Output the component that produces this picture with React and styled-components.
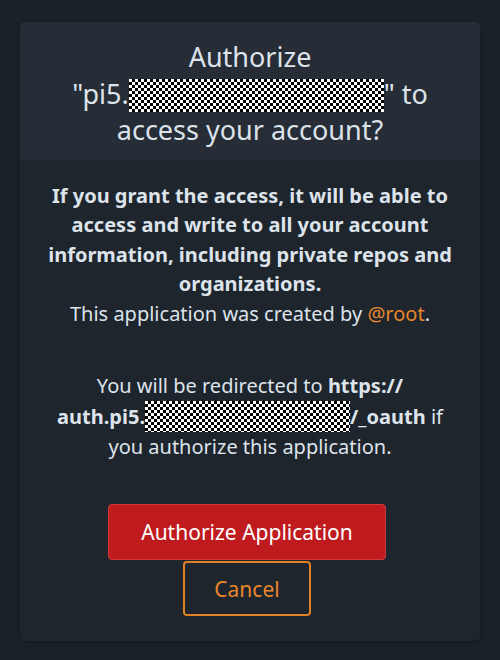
import styled, { createGlobalStyle } from "styled-components";

const GlobalStyle = createGlobalStyle`
    html, body {
        margin: 0;
        padding: 0;
        background: #1b2129;
    }
    body {
        font-family: "Noto Sans", "Open Sans", sans-serif;
        color: #dde3ea;
    }
`

const Page = styled.div`
    width: 500px;
    height: 660px;
    padding: 22px 20px 0 20px;
    box-sizing: border-box;
`

const Card = styled.div`
    width: 460px;
    border-radius: 5px;
    background: #1e252d;
    overflow: hidden;
    box-shadow: 0 1px 3px rgba(0, 0, 0, 0.25);
`

const Header = styled.div`
    background: #262d36;
    padding: 17px 20px 11px 20px;
    text-align: center;
`

const Title = styled.h1`
    margin: 0;
    font-size: 27px;
    font-weight: 400;
    line-height: 36.5px;
    color: #dde3ea;
`

const Redacted = styled.span`
    display: inline-block;
    vertical-align: ${(p) => p.$align || "-7px"};
    width: ${(p) => p.$width}px;
    height: ${(p) => p.$height}px;
    background-color: #fff;
    background-image: conic-gradient(#000 90deg, #fff 90deg 180deg, #000 180deg 270deg, #fff 270deg);
    background-size: 6px 6px;
`

const Body = styled.div`
    padding: 21px 10px 25px 10px;
    display: flex;
    flex-direction: column;
    align-items: center;
    text-align: center;
`

const Warning = styled.p`
    margin: 0;
    font-size: 20px;
    line-height: 29.5px;
    font-weight: 700;
    white-space: nowrap;
`

const Creator = styled.p`
    margin: 0;
    font-size: 20px;
    line-height: 29.5px;
`

const Handle = styled.span`
    color: #e8872b;
`

const Redirect = styled.p`
    margin: 43px 0 0 0;
    font-size: 20px;
    line-height: 30px;
    white-space: nowrap;
`

const Buttons = styled.div`
    margin-top: 42px;
    margin-right: 6px;
    display: flex;
    flex-direction: column;
    align-items: center;
    gap: 1px;
`

const Button = styled.button`
    font-family: "Noto Sans", "Open Sans", sans-serif;
    font-size: 21px;
    border-radius: 4px;
    cursor: pointer;
    box-sizing: border-box;
    height: ${(p) => (p.$primary ? "56px" : "55px")};
    width: ${(p) => (p.$primary ? "278px" : "128px")};
    color: ${(p) => (p.$primary ? "#ffffff" : "#e8872b")};
    background: ${(p) => (p.$primary ? "#bf1b1e" : "transparent")};
    border: ${(p) => (p.$primary ? "1px solid #d0393a" : "2px solid #e07f25")};
`

export default function App() {
    return (
        <>
            <GlobalStyle />
            <Page>
                <Card>
                    <Header>
                        <Title>
                            Authorize
                            <br />
                            "pi5.<Redacted $width={255} $height={33} $align="-8px" />" to
                            <br />
                            access your account?
                        </Title>
                    </Header>
                    <Body>
                        <Warning>
                            If you grant the access, it will be able to
                            <br />
                            access and write to all your account
                            <br />
                            information, including private repos and
                            <br />
                            organizations.
                        </Warning>
                        <Creator>
                            This application was created by <Handle>@root</Handle>.
                        </Creator>
                        <Redirect>
                            You will be redirected to <b>https://</b>
                            <br />
                            <b>auth.pi5.<Redacted $width={205} $height={31} $align="-8px" />/_oauth</b> if
                            <br />
                            you authorize this application.
                        </Redirect>
                        <Buttons>
                            <Button $primary>Authorize Application</Button>
                            <Button>Cancel</Button>
                        </Buttons>
                    </Body>
                </Card>
            </Page>
        </>
    );
}
